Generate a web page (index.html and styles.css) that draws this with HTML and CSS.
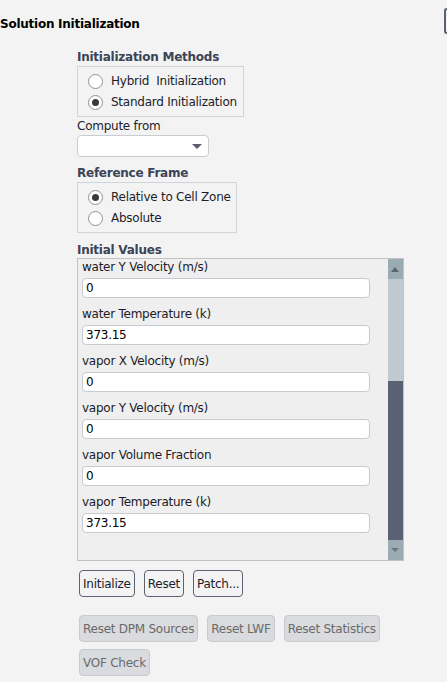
FILE: index.html
```html
<!DOCTYPE html>
<html lang="en">
<head>
  <meta charset="UTF-8">
  <title>Solution Initialization</title>
  <link rel="stylesheet" href="styles.css">
</head>
<body>
  <div class="header">
    <h1>Solution Initialization</h1>
    <div class="edge-btn"></div>
  </div>

  <div class="panel">
    <h2>Initialization Methods</h2>
    <div class="group group-methods">
      <label class="radio"><span class="dot"></span>Hybrid&nbsp; Initialization</label>
      <label class="radio"><span class="dot on"></span>Standard Initialization</label>
    </div>

    <div class="field-label">Compute from</div>
    <div class="dropdown"><span class="caret"></span></div>

    <h2>Reference Frame</h2>
    <div class="group group-frame">
      <label class="radio"><span class="dot on"></span>Relative to Cell Zone</label>
      <label class="radio"><span class="dot"></span>Absolute</label>
    </div>

    <h2>Initial Values</h2>
    <div class="values">
      <div class="values-list">
        <div class="row"><div class="row-label">water Y Velocity (m/s)</div><div class="input">0</div></div>
        <div class="row"><div class="row-label">water Temperature (k)</div><div class="input">373.15</div></div>
        <div class="row"><div class="row-label">vapor X Velocity (m/s)</div><div class="input">0</div></div>
        <div class="row"><div class="row-label">vapor Y Velocity (m/s)</div><div class="input">0</div></div>
        <div class="row"><div class="row-label">vapor Volume Fraction</div><div class="input">0</div></div>
        <div class="row"><div class="row-label">vapor Temperature (k)</div><div class="input">373.15</div></div>
      </div>
      <div class="scrollbar">
        <div class="arrow up"></div>
        <div class="track"></div>
        <div class="thumb"></div>
        <div class="arrow down"></div>
      </div>
    </div>

    <div class="buttons">
      <button class="btn">Initialize</button>
      <button class="btn">Reset</button>
      <button class="btn">Patch...</button>
    </div>

    <div class="buttons disabled-row">
      <button class="btn off">Reset DPM Sources</button>
      <button class="btn off">Reset LWF</button>
      <button class="btn off">Reset Statistics</button>
    </div>
    <div class="buttons second-row">
      <button class="btn off">VOF Check</button>
    </div>
  </div>
</body>
</html>
```

FILE: styles.css
```css
body {
  margin: 0;
  background-color: #f3f3f3;
  font-family: "DejaVu Sans", sans-serif;
  font-size: 12px;
  letter-spacing: -0.25px;
  color: #1c1c2a;
}

.header {
  display: flex;
  justify-content: space-between;
  align-items: flex-start;
  height: 50px;
}

h1 {
  margin: 17px 0 0 0;
  font-size: 12px;
  font-weight: bold;
  color: #000;
}

.edge-btn {
  margin-top: 8px;
  width: 1px;
  height: 22px;
  border: 2px solid #5a6172;
  border-right: none;
  border-radius: 4px 0 0 4px;
}

.panel {
  padding-left: 77px;
}

h2 {
  margin: 0;
  font-size: 12px;
  font-weight: bold;
  color: #3b4356;
  line-height: 15px;
}

.group {
  border: 1px solid #cfd3da;
  display: flex;
  flex-direction: column;
  gap: 5px;
  padding: 6px 0 6px 10px;
  margin: 1px 0 2px 0;
}

.group-methods {
  width: 155px;
}

.group-frame {
  width: 148px;
  margin-bottom: 10px;
}

.radio {
  display: flex;
  align-items: center;
  height: 16px;
}

.dot {
  width: 13px;
  height: 13px;
  border: 1px solid #8e929a;
  border-radius: 50%;
  background-color: #fff;
  margin-right: 8px;
  position: relative;
}

.dot.on::after {
  content: "";
  position: absolute;
  left: 3px;
  top: 3px;
  width: 7px;
  height: 7px;
  border-radius: 50%;
  background-color: #3a3a3a;
}

.field-label {
  line-height: 15px;
  margin-bottom: 1px;
}

.dropdown {
  width: 130px;
  height: 20px;
  border: 1px solid #c9cdd3;
  border-radius: 4px;
  background-color: #fff;
  position: relative;
  margin-bottom: 9px;
}

.caret {
  position: absolute;
  right: 6px;
  top: 8px;
  border-left: 5px solid transparent;
  border-right: 5px solid transparent;
  border-top: 5px solid #5a6070;
}

.values {
  display: flex;
  width: 325px;
  height: 301px;
  border: 1px solid #c2c2c2;
  background-color: #efefef;
}

.values-list {
  flex: 1;
  padding: 0 0 0 4px;
}

.row {
  height: 47px;
}

.row-label {
  line-height: 16px;
  margin-bottom: 3px;
}

.input {
  width: 283px;
  height: 18px;
  line-height: 18px;
  border: 1px solid #c6cad2;
  border-radius: 4px;
  background-color: #fff;
  padding-left: 3px;
  color: #000;
}

.scrollbar {
  width: 15px;
  display: flex;
  flex-direction: column;
}

.arrow {
  height: 20px;
  background-color: #9babb4;
  position: relative;
}

.arrow::after {
  content: "";
  position: absolute;
  left: 3px;
  top: 8px;
  border-left: 4px solid transparent;
  border-right: 4px solid transparent;
}

.arrow.up::after {
  border-bottom: 5px solid #5c6474;
}

.arrow.down::after {
  border-top: 4px solid #6c7484;
}

.track {
  height: 102px;
  background-color: #c1c9d0;
}

.thumb {
  flex: 1;
  background-color: #5a6172;
}

.buttons {
  display: flex;
  gap: 9px;
  margin-top: 9px;
  padding-left: 2px;
}

.btn {
  font-family: inherit;
  font-size: 12px;
  letter-spacing: -0.25px;
  height: 27px;
  padding: 0 3px;
  background-color: #f3f3f3;
  border: 1px solid #5c6272;
  border-radius: 4px;
  color: #1c1c2a;
}

.disabled-row {
  margin-top: 18px;
}

.second-row {
  margin-top: 7px;
}

.btn.off {
  background-color: #d9dbde;
  border-color: #c8cacd;
  color: #6a6a6a;
}
```
